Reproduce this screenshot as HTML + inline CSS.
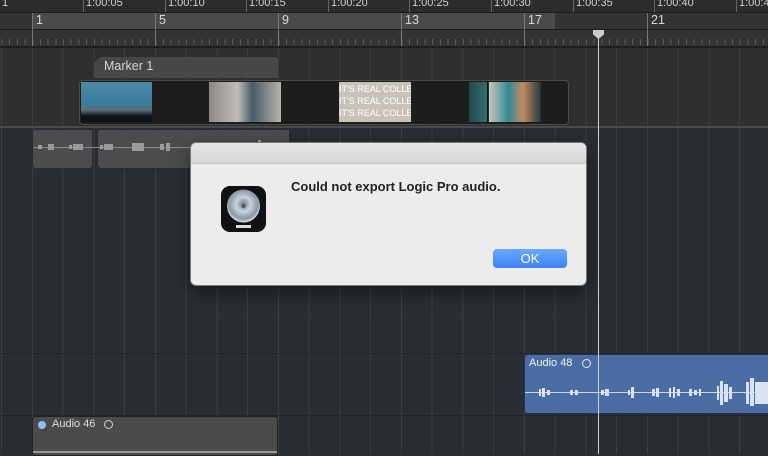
<!DOCTYPE html>
<html><head><style>
*{margin:0;padding:0;box-sizing:border-box}
body{width:768px;height:454px;overflow:hidden;background:#292d34;font-family:"Liberation Sans",sans-serif;position:relative}
.a{position:absolute}
.tc{color:#cfcfcf;font-size:11px;top:-3px}
.bn{color:#d8d8d8;font-size:12.5px;top:13px}
</style></head><body>
<div class="a" style="left:0;top:0;width:768px;height:12px;background:#2c2c2c"></div>
<div class="a" style="left:0;top:12px;width:768px;height:1px;background:#1a1a1a"></div>
<div class="a" style="left:0;top:13px;width:768px;height:17px;background:#333"></div>
<div class="a" style="left:32px;top:13px;width:523px;height:16px;background:#4a4a4a"></div>
<div class="a" style="left:0;top:29px;width:768px;height:1px;background:#1a1a1a"></div>
<div class="a" style="left:0;top:30px;width:768px;height:16px;background:#333;background-image:repeating-linear-gradient(90deg,transparent 0 1.5px,#5a5a5a 1.5px 2.5px,transparent 2.5px 7.69px);background-position:0 9px;background-size:100% 6px;background-repeat:no-repeat"></div>
<div class="a" style="left:0;top:46px;width:768px;height:2px;background:#1c1c1c"></div>
<div class="a" style="left:0;top:48px;width:768px;height:78px;background:#2f2f2f;background-image:repeating-linear-gradient(90deg,transparent 0 1px,#3e3e3e 1px 2px,transparent 2px 30.75px)"></div>
<div class="a" style="left:32px;top:13px;width:1px;height:33px;background:#777"></div>
<div class="a" style="left:155px;top:13px;width:1px;height:33px;background:#777"></div>
<div class="a" style="left:278px;top:13px;width:1px;height:33px;background:#777"></div>
<div class="a" style="left:401px;top:13px;width:1px;height:33px;background:#777"></div>
<div class="a" style="left:524px;top:13px;width:1px;height:33px;background:#777"></div>
<div class="a" style="left:647px;top:13px;width:1px;height:33px;background:#777"></div>
<div class="a tc" style="left:2px">1</div>
<div class="a tc" style="left:86px">1:00:05</div>
<div class="a tc" style="left:168px">1:00:10</div>
<div class="a tc" style="left:249px">1:00:15</div>
<div class="a tc" style="left:331px">1:00:20</div>
<div class="a tc" style="left:412px">1:00:25</div>
<div class="a tc" style="left:494px">1:00:30</div>
<div class="a tc" style="left:576px">1:00:35</div>
<div class="a tc" style="left:657px">1:00:40</div>
<div class="a tc" style="left:739px">1:00:4</div>
<div class="a" style="left:83px;top:0;width:1px;height:12px;background:#666"></div>
<div class="a" style="left:165px;top:0;width:1px;height:12px;background:#666"></div>
<div class="a" style="left:246px;top:0;width:1px;height:12px;background:#666"></div>
<div class="a" style="left:328px;top:0;width:1px;height:12px;background:#666"></div>
<div class="a" style="left:409px;top:0;width:1px;height:12px;background:#666"></div>
<div class="a" style="left:491px;top:0;width:1px;height:12px;background:#666"></div>
<div class="a" style="left:573px;top:0;width:1px;height:12px;background:#666"></div>
<div class="a" style="left:654px;top:0;width:1px;height:12px;background:#666"></div>
<div class="a" style="left:736px;top:0;width:1px;height:12px;background:#666"></div>
<div class="a bn" style="left:36px">1</div>
<div class="a bn" style="left:159px">5</div>
<div class="a bn" style="left:282px">9</div>
<div class="a bn" style="left:405px">13</div>
<div class="a bn" style="left:528px">17</div>
<div class="a bn" style="left:651px">21</div>
<div class="a" style="left:94px;top:57px;width:184px;height:21px;background:#474747;border-radius:0 3px 0 0;clip-path:polygon(6px 0,100% 0,100% 100%,0 100%,0 6px)"></div>
<div class="a" style="left:104px;top:59px;color:#d6d6d6;font-size:12.5px">Marker 1</div>
<div class="a" style="left:79px;top:80px;width:490px;height:45px;background:#1d1d1d;border:1.5px solid #4a4a4a;border-radius:4px"></div>
<div class="a" style="left:81px;top:82px;width:71px;height:40px;background:linear-gradient(180deg,#4a8aa6 0,#3a7c9c 55%,#5a6e76 70%,#0e1418 85%)"></div>
<div class="a" style="left:209px;top:82px;width:72px;height:40px;background:linear-gradient(90deg,#8c8a84,#bfbdb6 40%,#4a5a66 60%,#b7b2aa)"></div>
<div class="a" style="left:339px;top:82px;width:72px;height:40px;background:#c8c2b8;color:#fff;font-size:9px;line-height:12px;padding-top:1px;overflow:hidden;white-space:nowrap">IT'S REAL COLLEGE<br>IT'S REAL COLLEGE<br>IT'S REAL COLLEGE</div>
<div class="a" style="left:469px;top:82px;width:72px;height:40px;background:linear-gradient(90deg,#1f4a4e,#2f6f70 25%,#000 25.5% 27%,#c9c4b8 28%,#2f8a94 55%,#c48a60 75%,#1f3a40)"></div>
<div class="a" style="left:0;top:126px;width:768px;height:2px;background:#4a4a4a"></div>
<div class="a" style="left:0;top:128px;width:768px;height:326px;background:#292d34;background-image:repeating-linear-gradient(90deg,transparent 0 1px,#3a3e45 1px 2px,transparent 2px 30.75px)"></div>
<div class="a" style="left:0;top:353px;width:768px;height:1px;background:#22252b"></div>
<div class="a" style="left:0;top:415px;width:768px;height:1px;background:#22252b"></div>
<div class="a" style="left:32px;top:129px;width:61px;height:40px;background:#4c4c4e;border:1px solid #2a2a2a;border-radius:0 0 4px 4px"></div>
<div class="a" style="left:97px;top:129px;width:193px;height:40px;background:#4c4c4e;border:1px solid #2a2a2a;border-radius:0 0 4px 4px"></div>
<div class="a" style="left:34px;top:147px;width:254px;height:1px;background:#8a8a8a"></div>
<svg class="a" style="left:32px;top:140px" width="260" height="16"><g fill="#9a9a9a">
<rect x="6" y="5" width="4" height="4"/><rect x="16" y="4" width="6" height="6"/><rect x="37" y="5" width="3" height="4"/><rect x="41" y="4" width="10" height="6"/><rect x="68" y="5" width="3" height="4"/><rect x="72" y="4" width="9" height="6"/><rect x="100" y="3" width="12" height="8"/><rect x="128" y="4" width="4" height="6"/><rect x="134" y="3" width="4" height="8"/><rect x="226" y="0" width="3" height="10"/></g></svg>
<div class="a" style="left:524px;top:354px;width:250px;height:60px;background:#4a6ea3;border:1px solid #233450;border-radius:4px"></div>
<div class="a" style="left:529px;top:357px;color:#f0f0f0;font-size:11px">Audio 48</div>
<div class="a" style="left:582px;top:359px;width:9px;height:9px;border:1.3px solid #e8e8e8;border-radius:50%"></div>
<div class="a" style="left:525px;top:392px;width:243px;height:1px;background:#c8d6ec"></div>
<svg class="a" style="left:524px;top:378px" width="244" height="30"><g fill="#d9e3f3">
<rect x="15" y="11" width="2" height="7"/><rect x="18" y="10" width="3" height="9"/><rect x="23" y="12" width="3" height="5"/>
<rect x="46" y="12" width="3" height="5"/><rect x="51" y="12" width="3" height="5"/>
<rect x="77" y="12" width="3" height="5"/><rect x="81" y="11" width="4" height="7"/>
<rect x="104" y="12" width="2" height="5"/><rect x="107" y="9" width="3" height="11"/>
<rect x="128" y="11" width="3" height="7"/><rect x="132" y="10" width="3" height="9"/>
<rect x="145" y="10" width="2" height="9"/><rect x="149" y="9" width="2" height="11"/><rect x="153" y="11" width="3" height="7"/>
<rect x="165" y="11" width="3" height="7"/><rect x="170" y="12" width="3" height="5"/><rect x="175" y="11" width="2" height="7"/>
<rect x="193" y="8" width="2" height="14"/><rect x="196" y="3" width="3" height="24"/><rect x="200" y="6" width="4" height="18"/><rect x="205" y="9" width="3" height="12"/><rect x="222" y="4" width="3" height="22"/><rect x="226" y="0" width="4" height="28"/><rect x="231" y="4" width="13" height="22"/></g></svg>
<div class="a" style="left:32px;top:416px;width:246px;height:40px;background:#4b4b4b;border:1px solid #222;border-radius:4px"></div>
<div class="a" style="left:38px;top:421px;width:8px;height:8px;border-radius:50%;background:#8fbfff"></div>
<div class="a" style="left:52px;top:418px;color:#ddd;font-size:11px">Audio 46</div>
<div class="a" style="left:104px;top:420px;width:9px;height:9px;border:1.3px solid #ccc;border-radius:50%"></div>
<div class="a" style="left:33px;top:451px;width:244px;height:2px;background:#999"></div>
<div class="a" style="left:598px;top:36px;width:1px;height:418px;background:#d0d0d0"></div>
<div class="a" style="left:593px;top:30px;width:11px;height:9px;background:#ccc;clip-path:polygon(0 0,100% 0,100% 50%,50% 100%,0 50%)"></div>
<div class="a" style="left:191px;top:143px;width:395px;height:142px;background:#ececec;border-radius:5px;box-shadow:0 0 0 1px #777,0 6px 18px rgba(0,0,0,.5);overflow:hidden">
 <div style="height:21px;background:linear-gradient(#e6e6e6,#d6d6d6);border-bottom:1px solid #c8c8c8"></div>
</div>
<svg class="a" style="left:220px;top:185px" width="47" height="48">
<defs><radialGradient id="d" cx="50%" cy="45%" r="55%"><stop offset="0" stop-color="#6a7280"/><stop offset=".4" stop-color="#c9d2de"/><stop offset=".8" stop-color="#8b95a4"/><stop offset="1" stop-color="#e4e9ef"/></radialGradient></defs>
<rect x="1" y="1" width="45" height="46" rx="9" fill="#111"/>
<circle cx="23.5" cy="21" r="16.5" fill="url(#d)"/>
<circle cx="23.5" cy="21" r="2" fill="#555"/>
<rect x="16" y="40" width="15" height="3" fill="#ddd"/>
</svg>
<div class="a" style="left:291px;top:179px;color:#222;font-size:13px;font-weight:bold">Could not export Logic Pro audio.</div>
<div class="a" style="left:493px;top:249px;width:74px;height:19px;background:linear-gradient(#6ca8fb,#3a82f7);border-radius:4px;color:#fff;font-size:13px;text-align:center;line-height:19px">OK</div>
</body></html>
